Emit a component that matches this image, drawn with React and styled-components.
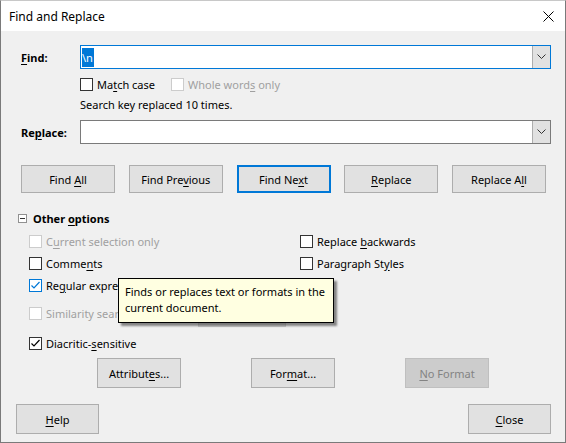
import React from "react";
import styled, { createGlobalStyle, css } from "styled-components";

const Global = createGlobalStyle`
  html, body {
    margin: 0;
    padding: 0;
    background: #f0f0f0;
  }
  body {
    font-family: "Noto Sans", "Liberation Sans", sans-serif;
    font-size: 11px;
    color: #000;
  }
`;

const Window = styled.div`
  position: relative;
  width: 566px;
  height: 443px;
  box-sizing: border-box;
  border: 1px solid #7a7a7a;
  border-top-color: #c8c8c8;
  background: #f0f0f0;
  display: flex;
  flex-direction: column;
  overflow: hidden;
`;

const TitleBar = styled.div`
  height: 30px;
  background: #fff;
  display: flex;
  align-items: center;
  justify-content: space-between;
  padding: 0 10px 0 8px;
  font-size: 12px;
`;

const CloseIcon = styled.svg`
  width: 11px;
  height: 11px;
  margin-right: 1px;
`;

const Body = styled.div`
  flex: 1;
  display: flex;
  flex-direction: column;
  padding: 14px 14px 0 19px;
`;

const FieldGrid = styled.div`
  display: grid;
  grid-template-columns: 60px 1fr;
  align-items: center;
`;

const Label = styled.label`
  font-weight: bold;
  padding-left: 1px;
`;

const Combo = styled.div`
  height: 24px;
  box-sizing: border-box;
  border: 1px solid ${(p) => (p.focused ? "#0078d7" : "#7a7a7a")};
  background: #fff;
  display: flex;
  align-items: stretch;
`;

const ComboText = styled.div`
  flex: 1;
  display: flex;
  align-items: center;
  padding-left: 1px;
`;

const Selected = styled.span`
  background: #0078d7;
  color: #fff;
  padding: 2px 1px 2px 0;
`;

const ComboButton = styled.div`
  width: 17px;
  background: #e1e1e1;
  border-left: 1px solid #adadad;
  display: flex;
  align-items: center;
  justify-content: center;
`;

const InlineOptions = styled.div`
  display: flex;
  gap: 16px;
  margin-top: 4px;
`;

const Status = styled.div`
  height: 16px;
  line-height: 16px;
  margin-top: 2px;
  margin-bottom: 7px;
`;

const Check = styled.label`
  display: flex;
  align-items: center;
  gap: 4px;
  height: 22px;
  white-space: nowrap;
  color: ${(p) => (p.disabled ? "#a0a0a0" : "#000")};
`;

const Box = styled.span`
  width: 13px;
  height: 13px;
  box-sizing: border-box;
  border: 1px solid
    ${(p) => (p.disabled ? "#cccccc" : p.hover ? "#0078d7" : "#333333")};
  background: #fff;
  display: flex;
  align-items: center;
  justify-content: center;
  flex-shrink: 0;
`;

const U = styled.span`
  text-decoration: underline;
  text-underline-offset: 2px;
`;

const ButtonRow = styled.div`
  display: flex;
  justify-content: space-between;
  margin-top: 21px;
  padding-left: 1px;
  padding-right: 5px;
`;

const Button = styled.button`
  font: inherit;
  width: ${(p) => p.w || 94}px;
  height: ${(p) => p.h || 28}px;
  background: #e1e1e1;
  border: 1px solid #adadad;
  color: #000;
  padding: 0;
  white-space: nowrap;
  ${(p) =>
    p.focused &&
    css`
      border: 2px solid #0078d7;
    `}
  ${(p) =>
    p.disabled &&
    css`
      background: #cccccc;
      border-color: #bfbfbf;
      color: #838383;
    `}
`;

const SectionHead = styled.div`
  display: flex;
  align-items: center;
  gap: 6px;
  margin-top: 17px;
  margin-left: -2px;
  font-weight: bold;
  height: 16px;
`;

const Expander = styled.span`
  width: 9px;
  height: 9px;
  box-sizing: border-box;
  border: 1px solid #919191;
  background: #fff;
  position: relative;
  &::after {
    content: "";
    position: absolute;
    left: 1px;
    right: 1px;
    top: 3px;
    height: 1px;
    background: #333;
  }
`;

const OptionsGrid = styled.div`
  display: grid;
  grid-template-columns: 271px 1fr;
  margin-top: 4px;
  padding-left: 9px;
`;

const Column = styled.div`
  display: flex;
  flex-direction: column;
`;

const SimilarRow = styled.div`
  display: grid;
  grid-template-columns: 169px auto;
  align-items: center;
  height: 29px;
  margin-top: 3px;
`;

const SimilarButton = styled(Button)`
  margin-top: 4px;
  background: #d9d9d9;
  border-color: #cfcfcf;
`;

const DiacriticRow = styled.div`
  margin-top: 4px;
`;

const AttrRow = styled.div`
  display: flex;
  gap: 70px;
  margin-top: 4px;
  padding-left: 77px;
`;

const Footer = styled.div`
  display: flex;
  justify-content: space-between;
  margin-top: 16px;
  margin-left: -4px;
`;

const Tooltip = styled.div`
  position: absolute;
  left: 117px;
  top: 277px;
  width: 216px;
  height: 45px;
  box-sizing: border-box;
  background: #ffffe1;
  border: 1px solid #000;
  box-shadow: 3px 3px 2px rgba(0, 0, 0, 0.45);
  padding: 5px 4px 0 6px;
  line-height: 16px;
  white-space: nowrap;
  color: #000;
`;

const Checkmark = ({ color }) => (
  <svg width="11" height="11" viewBox="0 0 11 11">
    <path d="M1.5 5.5 L4 8 L9.5 2" fill="none" stroke={color} strokeWidth="1.2" />
  </svg>
);

const Option = ({ children, checked, disabled, hover }) => (
  <Check disabled={disabled}>
    <Box disabled={disabled} hover={hover}>
      {checked && <Checkmark color={hover ? "#0078d7" : "#000"} />}
    </Box>
    <span>{children}</span>
  </Check>
);

const Arrow = () => (
  <svg width="9" height="6" viewBox="0 0 9 6">
    <path d="M0.5 0.5 L4.5 4.5 L8.5 0.5" fill="none" stroke="#333" strokeWidth="1" />
  </svg>
);

export default function App() {
  return (
    <>
      <Global />
      <Window>
        <TitleBar>
          <span>Find and Replace</span>
          <CloseIcon viewBox="0 0 11 11">
            <path d="M0.5 0.5 L10.5 10.5 M10.5 0.5 L0.5 10.5" stroke="#000" strokeWidth="1" />
          </CloseIcon>
        </TitleBar>
        <Body>
          <FieldGrid>
            <Label>
              <U>F</U>ind:
            </Label>
            <Combo focused>
              <ComboText>
                <Selected>\n</Selected>
              </ComboText>
              <ComboButton>
                <Arrow />
              </ComboButton>
            </Combo>
            <span />
            <InlineOptions>
              <Option>
                Ma<U>t</U>ch case
              </Option>
              <Option disabled>
                Whole word<U>s</U> only
              </Option>
            </InlineOptions>
            <span />
            <Status>Search key replaced 10 times.</Status>
            <Label>
              Re<U>p</U>lace:
            </Label>
            <Combo>
              <ComboText />
              <ComboButton>
                <Arrow />
              </ComboButton>
            </Combo>
          </FieldGrid>

          <ButtonRow>
            <Button>
              Find <U>A</U>ll
            </Button>
            <Button>
              Find Pre<U>v</U>ious
            </Button>
            <Button focused>
              Find Ne<U>x</U>t
            </Button>
            <Button>
              <U>R</U>eplace
            </Button>
            <Button>
              Replace A<U>l</U>l
            </Button>
          </ButtonRow>

          <SectionHead>
            <Expander />
            <span>
              Other <U>o</U>ptions
            </span>
          </SectionHead>

          <OptionsGrid>
            <Column>
              <Option disabled>
                C<U>u</U>rrent selection only
              </Option>
              <Option>
                Comme<U>n</U>ts
              </Option>
              <Option checked hover>
                Re<U>g</U>ular expressions
              </Option>
              <SimilarRow>
                <Option disabled>Similarity search</Option>
                <SimilarButton w={88} h={22} disabled>
                  Similarities...
                </SimilarButton>
              </SimilarRow>
              <DiacriticRow>
                <Option checked>
                  Diacritic-<U>s</U>ensitive
                </Option>
              </DiacriticRow>
            </Column>
            <Column>
              <Option>
                Replace <U>b</U>ackwards
              </Option>
              <Option>
                Paragraph St<U>y</U>les
              </Option>
            </Column>
          </OptionsGrid>

          <AttrRow>
            <Button w={84} h={30}>
              Attribut<U>e</U>s...
            </Button>
            <Button w={84} h={30}>
              For<U>m</U>at...
            </Button>
            <Button w={84} h={30} disabled>
              <U>N</U>o Format
            </Button>
          </AttrRow>

          <Footer>
            <Button w={83} h={30}>
              <U>H</U>elp
            </Button>
            <Button w={83} h={30}>
              <U>C</U>lose
            </Button>
          </Footer>
        </Body>
        <Tooltip>
          Finds or replaces text or formats in the
          <br />
          current document.
        </Tooltip>
      </Window>
    </>
  );
}
